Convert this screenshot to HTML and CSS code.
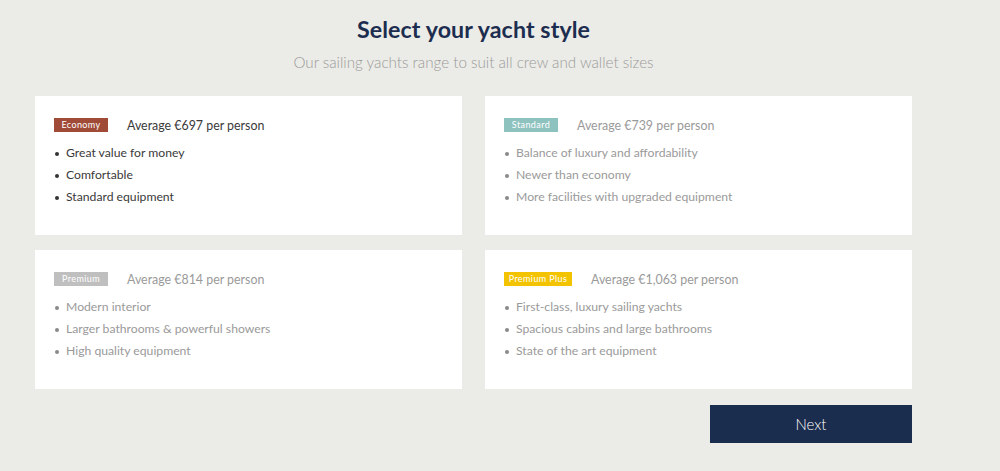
FILE: index.html
```html
<!DOCTYPE html>
<html lang="en">
<head>
<meta charset="utf-8">
<title>Select your yacht style</title>
<link rel="stylesheet" href="styles.css">
</head>
<body>
<main class="wrap">
  <header class="intro">
    <h1 class="title">Select your yacht style</h1>
    <p class="subtitle">Our sailing yachts range to suit all crew and wallet sizes</p>
  </header>
  <section class="grid">
    <article class="card card-active">
      <div class="card-head">
        <span class="badge badge-economy">Economy</span>
        <span class="price">Average €697 per person</span>
      </div>
      <ul class="features">
        <li>Great value for money</li>
        <li>Comfortable</li>
        <li>Standard equipment</li>
      </ul>
    </article>
    <article class="card">
      <div class="card-head">
        <span class="badge badge-standard">Standard</span>
        <span class="price">Average €739 per person</span>
      </div>
      <ul class="features">
        <li>Balance of luxury and affordability</li>
        <li>Newer than economy</li>
        <li>More facilities with upgraded equipment</li>
      </ul>
    </article>
    <article class="card">
      <div class="card-head">
        <span class="badge badge-premium">Premium</span>
        <span class="price">Average €814 per person</span>
      </div>
      <ul class="features">
        <li>Modern interior</li>
        <li>Larger bathrooms &amp; powerful showers</li>
        <li>High quality equipment</li>
      </ul>
    </article>
    <article class="card">
      <div class="card-head">
        <span class="badge badge-plus">Premium Plus</span>
        <span class="price">Average €1,063 per person</span>
      </div>
      <ul class="features">
        <li>First-class, luxury sailing yachts</li>
        <li>Spacious cabins and large bathrooms</li>
        <li>State of the art equipment</li>
      </ul>
    </article>
  </section>
  <div class="actions">
    <button class="next" type="button">Next</button>
  </div>
</main>
</body>
</html>
```

FILE: styles.css
```css
* { box-sizing: border-box; }
html, body { margin: 0; padding: 0; }
body {
  background: #ebebe7;
  font-family: "Lato", "Open Sans", "Liberation Sans", sans-serif;
  color: #333;
}
.wrap {
  width: 877px;
  margin-left: 35px;
  padding-top: 14px;
}
.intro { text-align: center; }
.title {
  margin: 0;
  font-size: 23.2px;
  line-height: 30px;
  font-weight: 700;
  color: #1c2d4f;
  letter-spacing: 0.1px;
}
.subtitle {
  margin: 9px 0 0;
  font-size: 15.2px;
  line-height: 18px;
  font-weight: 300;
  color: #9b9b9b;
}
.grid {
  margin-top: 25px;
  display: grid;
  grid-template-columns: 427px 427px;
  column-gap: 23px;
  row-gap: 15px;
}
.card {
  background: #fff;
  height: 139px;
  padding: 22px 19px;
}
.card-head {
  display: flex;
  align-items: center;
  gap: 19px;
  height: 14px;
}
.badge {
  display: inline-block;
  height: 14px;
  line-height: 14px;
  font-size: 9px;
  color: #fff;
  text-align: center;
  letter-spacing: 0.4px;
  padding: 0;
}
.badge-economy { background: #a04b38; width: 54px; }
.badge-standard { background: #8ec2bf; width: 54px; }
.badge-premium { background: #bfbfbf; width: 54px; }
.badge-plus { background: #f3c300; width: 68px; }
.price {
  font-size: 12.4px;
  font-weight: 400;
  color: #9a9a9a;
}
.card-active .price { color: #3a3a3a; }
.features {
  margin: 10px 0 0;
  padding: 0 0 0 12px;
  list-style: none;
}
.features li {
  position: relative;
  font-size: 12.2px;
  line-height: 22px;
  font-weight: 400;
  color: #9a9a9a;
}
.features li::before {
  content: "";
  position: absolute;
  left: -11px;
  top: 10px;
  width: 4px;
  height: 4px;
  border-radius: 50%;
  background: #8a8a8a;
}
.card-active .features li { color: #3a3a3a; }
.card-active .features li::before { background: #333; }
.actions {
  display: flex;
  justify-content: flex-end;
  margin-top: 16px;
}
.next {
  width: 202px;
  height: 38px;
  background: #1b2d4e;
  border: 0;
  color: #fff;
  font-family: "Lato", "Open Sans", "Liberation Sans", sans-serif;
  font-size: 15px;
  font-weight: 300;
  cursor: pointer;
}
```
